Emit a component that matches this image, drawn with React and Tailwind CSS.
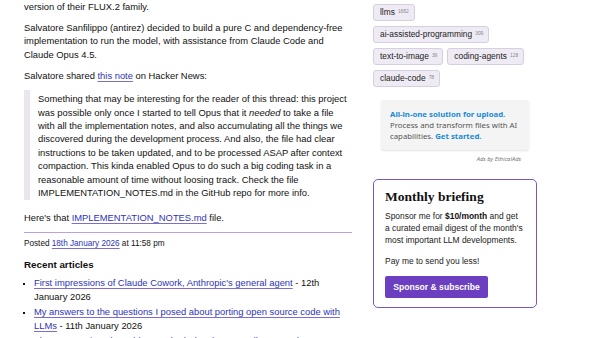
const linkCls = 'text-[#2e33b8] underline decoration-[#7d6fc9] underline-offset-[1.5px]'

function Tag({ name, count }) {
  return (
    <span className="shrink-0 whitespace-nowrap inline-flex items-center h-[17px] pl-[6px] pr-[5px] rounded-[3px] border border-[#d6cfe0] bg-[#efebf4] text-[8.4px] text-[#222] leading-none">
      {name}
      <span className="ml-[3px] text-[4.9px] text-[#888]">{count}</span>
    </span>
  )
}

export default function App() {
  return (
    <div className="w-[600px] h-[338px] overflow-hidden bg-white flex font-['Liberation_Sans',Arial,sans-serif] text-[#111]">
      {/* article */}
      <div className="w-[328px] shrink-0 ml-[24px] text-[9.4px] leading-[13.4px]">
        <p>version of their FLUX.2 family.</p>
        <p className="mt-[7.6px]">
          Salvatore Sanfilippo (antirez) decided to build a pure C and dependency-free implementation to run the model, with assistance from Claude Code and Claude Opus 4.5.
        </p>
        <p className="mt-[7.6px]">
          Salvatore shared <a className={linkCls}>this note</a> on Hacker News:
        </p>
        <blockquote className="mt-[8px] border-l-[6px] border-[#ebe5f0] pl-[8px] pt-[2px] pb-[1px]">
          Something that may be interesting for the reader of this thread: this project was possible only once I started to tell Opus that it <em>needed</em> to take a file with all the implementation notes, and also accumulating all the things we discovered during the development process. And also, the file had clear instructions to be taken updated, and to be processed ASAP after context compaction. This kinda enabled Opus to do such a big coding task in a reasonable amount of time without loosing track. Check the file IMPLEMENTATION_NOTES.md in the GitHub repo for more info.
        </blockquote>
        <p className="mt-[10.5px]">
          Here's that <a className={linkCls}>IMPLEMENTATION_NOTES.md</a> file.
        </p>
        <div className="mt-[8px] h-px bg-[#b9a3d9]" />
        <p className="mt-[5px] text-[8.2px] leading-[12px]">
          Posted <a className={linkCls}>18th January 2026</a> at 11:58 pm
        </p>
        <h3 className="mt-[8px] text-[9.8px] leading-[13px] font-bold">Recent articles</h3>
        <ul className="mt-[5px] list-[square] pl-[10px] marker:text-[7px]">
          <li>
            <a className={linkCls}>First impressions of Claude Cowork, Anthropic's general agent</a> - 12th January 2026
          </li>
          <li className="mt-[2px]">
            <a className={linkCls}>My answers to the questions I posed about porting open source code with LLMs</a> - 11th January 2026
          </li>
          <li className="mt-[2px]">
            <a className={linkCls}>Fly's new Sprites.dev addresses both developer sandboxes and API sandboxes at the same time</a> - 9th January 2026
          </li>
        </ul>
      </div>

      {/* sidebar */}
      <div className="ml-[21px] w-[164px] shrink-0 flex flex-col">
        <div className="mt-[4px] flex flex-col items-start gap-y-[5px]">
          <Tag name="llms" count="1682" />
          <Tag name="ai-assisted-programming" count="309" />
          <div className="flex gap-x-[4px]">
            <Tag name="text-to-image" count="39" />
            <Tag name="coding-agents" count="128" />
          </div>
          <Tag name="claude-code" count="78" />
        </div>

        <div className="mt-[13px] mx-[8px] rounded-[3px] bg-[#f4f4f4] shadow-[0_1px_2px_rgba(0,0,0,0.12)] px-[9px] pt-[9px] pb-[8px] text-[7.8px] leading-[11px] font-['Noto_Sans',sans-serif] text-[#555]">
          <span className="font-bold text-[#1a8ad6]">All-in-one solution for upload.</span>{' '}
          Process and transform files with AI capabilities.{' '}
          <span className="font-bold text-[#1a8ad6]">Get started.</span>
        </div>
        <div className="mt-[5px] mr-[16px] text-right text-[5.8px] italic text-[#777] font-['Noto_Sans',sans-serif]">
          Ads by EthicalAds
        </div>

        <div className="mt-[15px] rounded-[5px] border-[1.5px] border-[#7a56be] px-[11px] pt-[9.5px] pb-[8.5px]">
          <h2 className="font-['Liberation_Serif',serif] font-bold text-[13.5px] leading-[16px] text-[#111]">Monthly briefing</h2>
          <p className="mt-[5px] text-[8.45px] leading-[12px] text-[#222]">
            Sponsor me for <b className="text-[#111]">$10/month</b> and get<br />
            a curated email digest of the month's most important LLM developments.
          </p>
          <p className="mt-[9px] text-[8.45px] leading-[12px] text-[#222]">Pay me to send you less!</p>
          <button className="mt-[9px] h-[22px] w-[103px] rounded-[2px] bg-[#6b3fc0] text-white font-bold text-[8.6px]">
            Sponsor &amp; subscribe
          </button>
        </div>
      </div>
    </div>
  )
}
